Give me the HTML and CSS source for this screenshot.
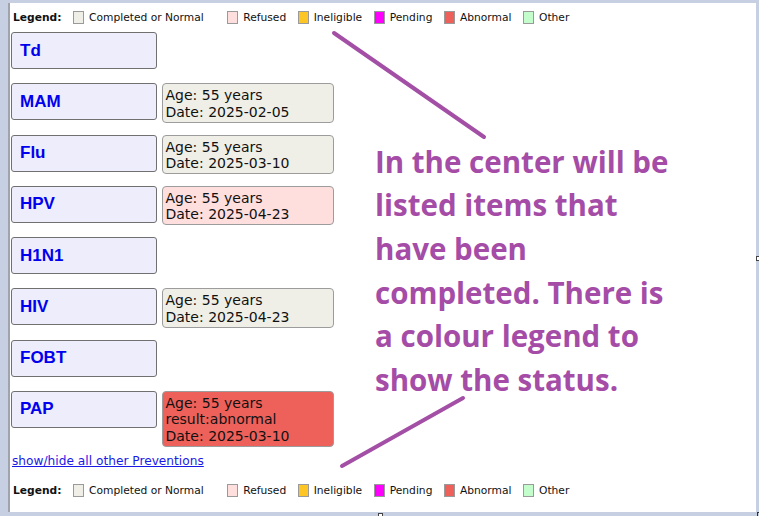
FILE: index.html
```html
<!DOCTYPE html>
<html lang="en">
<head>
<meta charset="utf-8">
<title>Preventions</title>
<link rel="stylesheet" href="styles.css">
</head>
<body>
<div class="frame">
  <div class="legend">
    <span class="legend-title">Legend:</span>
    <span class="legend-item first"><i class="swatch completed"></i>Completed or Normal</span>
    <span class="legend-item"><i class="swatch refused"></i>Refused</span>
    <span class="legend-item"><i class="swatch ineligible"></i>Ineligible</span>
    <span class="legend-item"><i class="swatch pending"></i>Pending</span>
    <span class="legend-item"><i class="swatch abnormal"></i>Abnormal</span>
    <span class="legend-item"><i class="swatch other"></i>Other</span>
  </div>

  <div class="list">
    <div class="row"><div class="name">Td</div></div>
    <div class="row">
      <div class="name">MAM</div>
      <div class="detail completed">Age: 55 years<br>Date: 2025-02-05</div>
    </div>
    <div class="row">
      <div class="name">Flu</div>
      <div class="detail completed">Age: 55 years<br>Date: 2025-03-10</div>
    </div>
    <div class="row">
      <div class="name">HPV</div>
      <div class="detail refused">Age: 55 years<br>Date: 2025-04-23</div>
    </div>
    <div class="row"><div class="name">H1N1</div></div>
    <div class="row">
      <div class="name">HIV</div>
      <div class="detail completed">Age: 55 years<br>Date: 2025-04-23</div>
    </div>
    <div class="row"><div class="name">FOBT</div></div>
    <div class="row last">
      <div class="name">PAP</div>
      <div class="detail abnormal">Age: 55 years<br>result:abnormal<br>Date: 2025-03-10</div>
    </div>
  </div>

  <div class="toggle-line"><a class="toggle" href="#">show/hide all other Preventions</a></div>

  <div class="legend bottom">
    <span class="legend-title">Legend:</span>
    <span class="legend-item first"><i class="swatch completed"></i>Completed or Normal</span>
    <span class="legend-item"><i class="swatch refused"></i>Refused</span>
    <span class="legend-item"><i class="swatch ineligible"></i>Ineligible</span>
    <span class="legend-item"><i class="swatch pending"></i>Pending</span>
    <span class="legend-item"><i class="swatch abnormal"></i>Abnormal</span>
    <span class="legend-item"><i class="swatch other"></i>Other</span>
  </div>
</div>

<!-- callout laid over the page -->
<div class="note">In the center will be<br>listed items that<br>have been<br>completed. There is<br>a colour legend to<br>show the status.</div>
<svg class="pointers" width="759" height="516" viewBox="0 0 759 516">
  <line x1="334" y1="33" x2="484" y2="137"/>
  <line x1="342" y1="466" x2="463" y2="398"/>
</svg>

<span class="handle handle-right"></span>
<span class="handle handle-bottom"></span>
<span class="corner"></span>
</body>
</html>
```
FILE: styles.css
```css
html, body {
  margin: 0;
  padding: 0;
}

body {
  width: 759px;
  height: 516px;
  background: #c7d0e2;
  position: relative;
  overflow: hidden;
  font-family: "DejaVu Sans", Verdana, sans-serif;
}

.frame {
  box-sizing: border-box;
  width: 748px;
  height: 509px;
  margin: 3px 0 0 8px;
  border-left: 2px solid #9ea3ac;
  background: #ffffff;
  overflow: hidden;
}

/* colour legend */
.legend {
  display: flex;
  align-items: center;
  height: 14px;
  margin: 7px 0 0 3px;
  font-size: 10.7px;
  color: #111;
  white-space: nowrap;
}

.legend.bottom {
  margin-top: 15.3px;
}

.legend-title {
  font-weight: bold;
  margin-right: 11.5px;
}

.legend-item {
  display: flex;
  align-items: center;
  margin-left: 11.5px;
}

.legend-item.first {
  margin-left: 0;
  margin-right: 12px;
}

.swatch {
  display: inline-block;
  box-sizing: border-box;
  width: 11px;
  height: 13px;
  margin-right: 5px;
  border: 1px solid #9a9a9a;
}

.completed { background: #efefe7; }
.refused { background: #ffdede; }
.ineligible { background: #fdc624; }
.pending { background: #ff00ff; }
.abnormal { background: #ee615a; }
.other { background: #c3fdcc; }

/* prevention rows */
.list {
  margin-top: 8px;
}

.row {
  display: flex;
  align-items: flex-start;
  gap: 4px;
  height: 51.25px;
  padding-left: 1px;
}

.row.last {
  height: auto;
}

.name {
  box-sizing: border-box;
  width: 146px;
  height: 37px;
  display: flex;
  align-items: center;
  padding-left: 8px;
  border: 1px solid #707070;
  border-radius: 3px;
  background: #ededfc;
  color: #0000ee;
  font-family: "Liberation Sans", Arial, sans-serif;
  font-weight: bold;
  font-size: 17px;
}

.detail {
  box-sizing: border-box;
  width: 172px;
  margin-left: 0.5px;
  padding: 3px 3px 1px 3px;
  border: 1px solid #9c9c9c;
  border-radius: 4px;
  font-size: 14px;
  line-height: 16.7px;
  color: #111;
}

.toggle-line {
  margin-top: 7px;
  padding-left: 2px;
  font-size: 12.2px;
  line-height: 14px;
}

.toggle {
  color: #1a1ae6;
  text-decoration: underline;
}

/* callout */
.note {
  position: absolute;
  left: 375px;
  top: 139.8px;
  font-family: "Open Sans", "Noto Sans", sans-serif;
  font-weight: 700;
  font-size: 29.5px;
  line-height: 43.6px;
  color: #a54ca7;
  white-space: nowrap;
}

.pointers {
  position: absolute;
  left: 0;
  top: 0;
  pointer-events: none;
}

.pointers line {
  stroke: #a34fa6;
  stroke-width: 4;
  stroke-linecap: round;
}

/* window resize grips */
.handle {
  position: absolute;
  box-sizing: border-box;
  width: 5px;
  height: 5px;
  background: #ffffff;
  border: 1px solid #444;
}

.handle-right {
  left: 756px;
  top: 256px;
}

.handle-bottom {
  left: 378px;
  top: 513px;
}

.corner {
  position: absolute;
  left: 757px;
  top: 512px;
  width: 3px;
  height: 5px;
  border-left: 1px solid #333;
  border-top: 1px solid #333;
}
```
